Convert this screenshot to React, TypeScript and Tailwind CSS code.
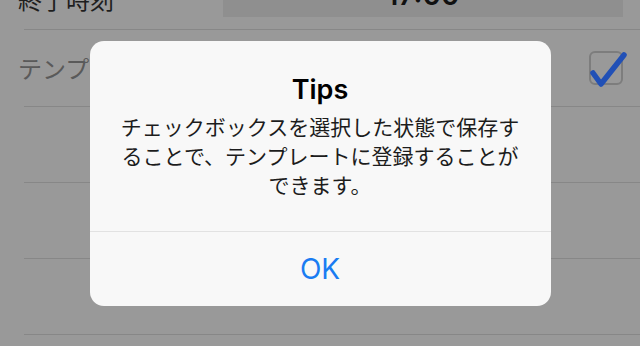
const jp = { fontFamily: '"Noto Sans CJK JP", "Noto Sans", sans-serif' };
const latin = { fontFamily: 'Inter, "Liberation Sans", "Noto Sans CJK JP", sans-serif' };

const Divider = () => <div className="ml-[24px] h-px bg-[#878787]" />;

const CheckBox = () => (
  <div className="relative w-[34px] h-[34px] rounded-[6px] border-2 border-[#7d7d7d]">
    <svg className="absolute -left-[2px] -top-[2px] overflow-visible" width="38" height="38" viewBox="0 0 38 38">
      <polyline
        points="4,22 12,33 35,4"
        fill="none"
        stroke="#2150b6"
        strokeWidth="5.5"
        strokeLinecap="round"
        strokeLinejoin="round"
      />
    </svg>
  </div>
);

const App = () => {
  return (
    <div className="relative w-[640px] h-[346px] overflow-hidden bg-[#999999]">
      {/* settings list behind the alert */}
      <div className="flex flex-col">
        <div className="-mt-[44px] h-[73px] flex items-end pb-[12px] pl-[18px] pr-[17px]">
          <span className="w-[205px] mb-[3px] text-[24px] leading-[30px] text-[#1e1e1e]" style={jp}>
            終了時刻
          </span>
          <div className="flex-1 h-[50px] bg-[#8f8f8f] flex items-center justify-center pt-[6px]">
            <span className="text-[28px] font-semibold text-[#111]" style={latin}>
              17:00
            </span>
          </div>
        </div>
        <Divider />
        <div className="h-[76px] flex items-center justify-between pl-[18px] pr-[17px]">
          <span className="text-[24px] text-[#5a5a5a]" style={jp}>
            テンプレート登録
          </span>
          <CheckBox />
        </div>
        <Divider />
        <div className="h-[75px]" />
        <Divider />
        <div className="h-[75px]" />
        <Divider />
        <div className="h-[75px]" />
        <Divider />
      </div>

      {/* alert */}
      <div className="absolute inset-0 flex items-center justify-center">
        <div className="w-[461px] h-[265px] rounded-[14px] bg-[#f8f8f8] flex flex-col overflow-hidden">
          <div className="flex-1 flex flex-col items-center pt-[32px]">
            <h2 className="text-[27px] leading-[34px] font-semibold text-black" style={latin}>
              Tips
            </h2>
            <p className="mt-[5px] text-[21px] leading-[29px] text-[#1c1c1c] text-center" style={jp}>
              チェックボックスを選択した状態で保存す
              <br />
              ることで、テンプレートに登録することが
              <br />
              できます。
            </p>
          </div>
          <div className="h-[75px] border-t border-[#e2e2e2] flex items-center justify-center">
            <span className="text-[28px] text-[#1a7cf2]" style={latin}>
              OK
            </span>
          </div>
        </div>
      </div>
    </div>
  );
};

export default App;
